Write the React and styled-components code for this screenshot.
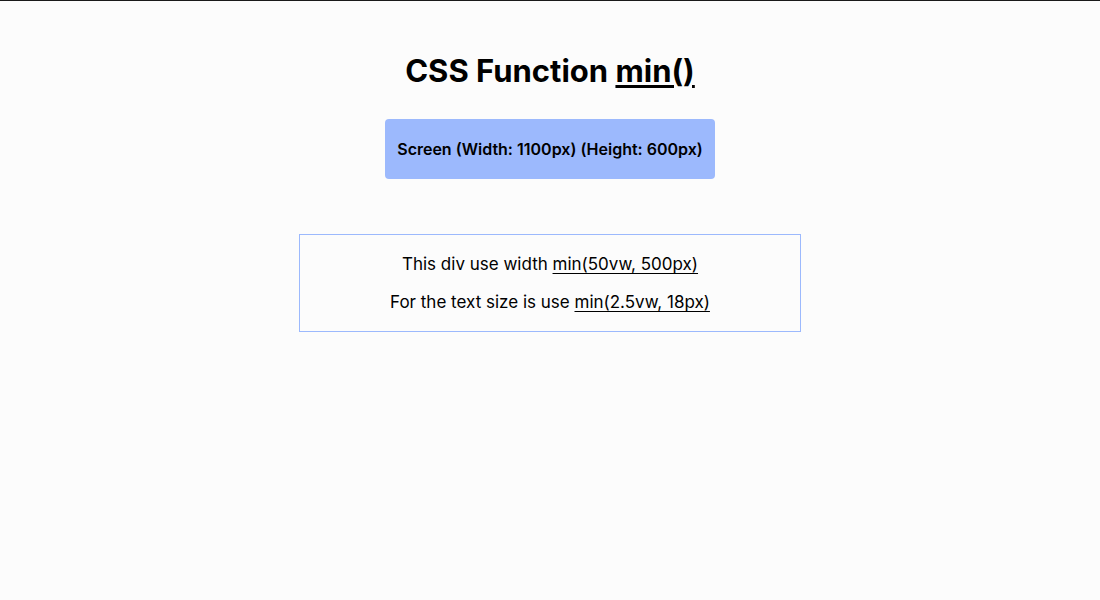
import styled, { createGlobalStyle } from "styled-components"

const GlobalStyle = createGlobalStyle`
    html, body {
        margin: 0;
        padding: 0;
        background: #fcfcfc;
    }
    body {
        font-family: Inter, "Noto Sans", sans-serif;
        color: #000;
        border-top: 1px solid #1a1a1a;
    }
`

const Page = styled.div`
    width: 100%;
    height: 599px;
    display: flex;
    flex-direction: column;
    align-items: center;
`

const Title = styled.h1`
    margin: 52px 0 0;
    font-size: 31px;
    font-weight: 700;
    line-height: 36px;
`

const Code = styled.span`
    text-decoration: underline;
    text-underline-offset: 3px;
`

const ScreenInfo = styled.div`
    margin-top: 30px;
    width: 330px;
    height: 60px;
    box-sizing: border-box;
    display: flex;
    align-items: center;
    justify-content: center;
    background-color: #9cb9fd;
    border-radius: 4px;
    font-size: 16px;
    font-weight: 600;
`

const MinBox = styled.div`
    margin-top: 55px;
    width: min(50vw, 500px);
    border: 1px solid #9cb9fd;
    padding: 19px 0;
    display: flex;
    flex-direction: column;
    align-items: center;
    gap: 18px;
    font-size: min(2.5vw, 17px);
`

const Line = styled.p`
    margin: 0;
    line-height: 20px;
`

const App = () => {
    return (
        <>
            <GlobalStyle />
            <Page>
                <Title>CSS Function <Code>min()</Code></Title>
                <ScreenInfo>Screen (Width: 1100px) (Height: 600px)</ScreenInfo>
                <MinBox>
                    <Line>This div use width <Code>min(50vw, 500px)</Code></Line>
                    <Line>For the text size is use <Code>min(2.5vw, 18px)</Code></Line>
                </MinBox>
            </Page>
        </>
    )
}

export default App
